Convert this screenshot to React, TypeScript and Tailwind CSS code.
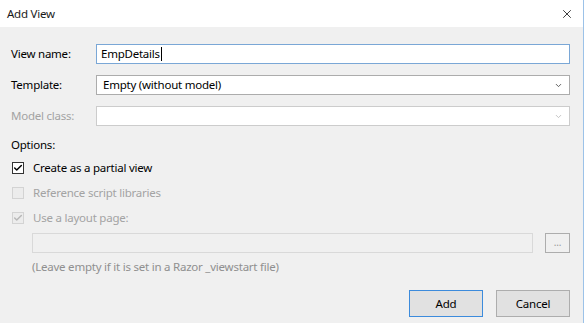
import { Check, ChevronDown, X } from "lucide-react";

function Field({ label, disabled, children }: { label: string; disabled?: boolean; children: React.ReactNode }) {
   return (
      <div className="flex h-5 items-center">
         <span className={`w-[85px] shrink-0 ${disabled ? "text-[#a3a3a3]" : "text-black"}`}>{label}</span>
         {children}
      </div>
   );
}

function Combo({ value, disabled }: { value?: string; disabled?: boolean }) {
   return (
      <div
         className={`flex h-5 flex-1 items-center justify-between border bg-white pl-[6px] pr-[6px] ${
            disabled ? "border-[#cccccc]" : "border-[#acacac]"
         }`}
      >
         <span>{value}</span>
         <ChevronDown className={`size-[9px] ${disabled ? "text-[#c0c0c0]" : "text-[#555]"}`} strokeWidth={2.5} />
      </div>
   );
}

function CheckRow({ label, checked, disabled }: { label: string; checked?: boolean; disabled?: boolean }) {
   return (
      <div className="flex h-[25px] items-center gap-[9px] pl-[1px]">
         <div
            className={`flex size-[12px] items-center justify-center border ${
               disabled ? "border-[#d3d3d3] bg-[#ececec]" : "border-[#333333] bg-white"
            }`}
         >
            {checked && (
               <Check className={`size-[10px] ${disabled ? "text-[#b8b8b8]" : "text-black"}`} strokeWidth={3.5} />
            )}
         </div>
         <span className={disabled ? "text-[#a3a3a3]" : "text-black"}>{label}</span>
      </div>
   );
}

export default function App() {
   return (
      <div className="flex h-[323px] w-[584px] flex-col overflow-hidden border-r border-[#9cc2e8] bg-[#f0f0f0] font-['Segoe_UI','Noto_Sans',sans-serif] text-[11.5px] leading-4 tracking-[-0.02em]">
         <div className="flex h-[27px] shrink-0 items-center justify-between bg-white pl-[7px] pr-[9px]">
            <span className="text-[#1a1a1a]">Add View</span>
            <X className="size-[14px] text-black" strokeWidth={1.3} />
         </div>

         <div className="flex flex-1 flex-col pl-[11px] pr-[13px] pt-[17px]">
            <Field label="View name:">
               <div className="flex h-5 flex-1 items-center border border-[#7aa7d6] bg-white pl-[4px]">
                  <span>EmpDetails</span>
                  <span className="ml-px h-[14px] w-px bg-black" />
               </div>
            </Field>
            <div className="mt-[11px]">
               <Field label="Template:">
                  <Combo value="Empty (without model)" />
               </Field>
            </div>
            <div className="mt-[11px]">
               <Field label="Model class:" disabled>
                  <Combo disabled />
               </Field>
            </div>

            <div className="mt-[11px] h-4">Options:</div>

            <div className="mt-[2px] flex flex-col">
               <CheckRow label="Create as a partial view" checked />
               <CheckRow label="Reference script libraries" disabled />
               <CheckRow label="Use a layout page:" checked disabled />
            </div>

            <div className="mt-[3px] flex items-center gap-3 pl-[21px]">
               <div className="h-5 flex-1 border border-[#d9d9d9] bg-[#f0f0f0]" />
               <div className="flex h-5 w-[25px] items-center justify-center border border-[#adadad] bg-[#f0f0f0] pb-[3px] text-[10px] text-[#9a9a9a]">
                  ...
               </div>
            </div>

            <div className="mt-[6px] pl-[21px] text-[#8f8f8f]">(Leave empty if it is set in a Razor _viewstart file)</div>

            <div className="mt-[15px] flex justify-end gap-[13px]">
               <button className="h-[27px] w-[74px] border border-[#3c8bdc] bg-[#e1e1e1] text-black">Add</button>
               <button className="h-[27px] w-[74px] border border-[#adadad] bg-[#e1e1e1] text-black">Cancel</button>
            </div>
         </div>
      </div>
   );
}
